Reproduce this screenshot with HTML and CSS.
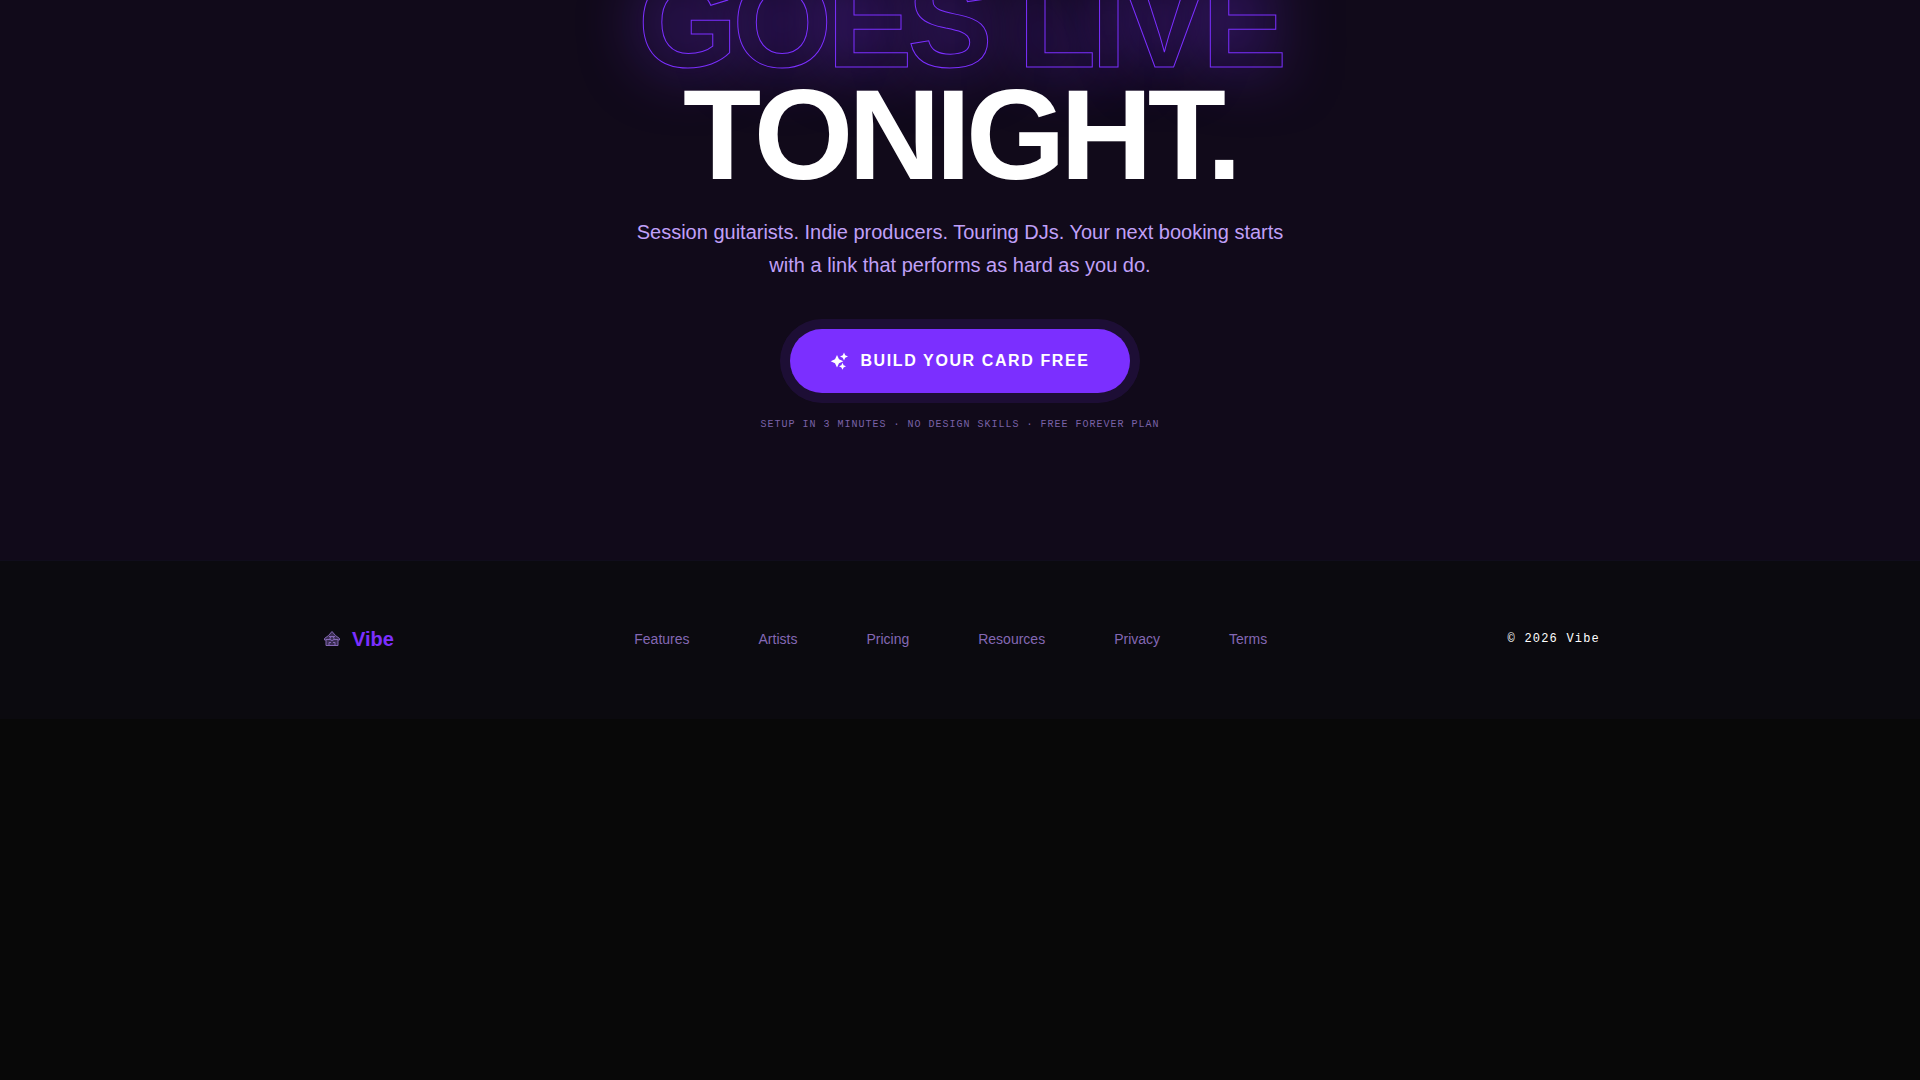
FILE: index.html
```
<!DOCTYPE html>
<html lang="en">
<head>
    <meta charset="UTF-8">
    <meta name="viewport" content="width=device-width, initial-scale=1.0">
    <title>Vibe</title>
    <link rel="stylesheet" href="styles.css">
</head>
<body>
    <section class="cta">
        <h2 class="cta-title">
            <span class="outline">GOES LIVE</span>
            <span class="solid">TONIGHT.</span>
        </h2>
        <p class="cta-text">Session guitarists. Indie producers. Touring DJs. Your next booking starts with a link that performs as hard as you do.</p>
        <button class="cta-button" type="button">
            <svg class="sparkle" viewBox="0 0 20 20" aria-hidden="true">
                <path d="M7 4 9 8.300 13.300 10.300 9 12.300 7 16.600 5 12.300 0.700 10.300 5 8.300Z"/>
                <path d="M14 1.500 15.200 4.300 18 5.500 15.200 6.700 14 9.500 12.800 6.700 10 5.500 12.800 4.300Z"/>
                <path d="M12.500 11.800 13.600 14.200 16 15.300 13.600 16.400 12.500 18.800 11.400 16.400 9 15.300 11.400 14.200Z"/>
            </svg>
            Build your card free
        </button>
        <p class="cta-note">Setup in 3 minutes · No design skills · Free forever plan</p>
    </section>

    <footer class="footer">
        <div class="footer-inner">
            <a class="brand" href="#">
                <svg class="brand-icon" viewBox="0 0 24 24" aria-hidden="true">
                    <path class="brand-shade" d="M12 4.500 15.500 8.500 19.500 11.500V13H18V18.500H6V13H4.500V11.500L8.500 8.500Z"/>
                    <path d="M9 9.500H15M6 12.500H10M14 12.500H18M9 15.500V18M15 15.500V18M9 15.500H11M13 15.500H15"/>
                    <circle cx="12" cy="11.500" r="2"/>
                </svg>
                Vibe
            </a>
            <nav class="footer-nav">
                <a href="#">Features</a>
                <a href="#">Artists</a>
                <a href="#">Pricing</a>
                <a href="#">Resources</a>
                <a href="#">Privacy</a>
                <a href="#">Terms</a>
            </nav>
            <span class="copyright">© 2026 Vibe</span>
        </div>
    </footer>
</body>
</html>
```

FILE: styles.css
```
* {
    box-sizing: border-box;
    margin: 0;
    padding: 0;
}
body {
    font-family: "Liberation Sans", Arial, sans-serif;
    background: #080808;
    color: #fff;
}
.cta {
    display: flex;
    flex-direction: column;
    align-items: center;
    padding: 0 24px 128px;
    background: #110a1a;
    text-align: center;
    overflow: hidden;
}
.cta-title {
    margin-top: -33px;
    font-size: 128px;
    font-weight: bold;
    line-height: 112px;
    letter-spacing: -0.04em;
}
.cta-title span {
    display: block;
}
.outline {
    color: transparent;
    -webkit-text-stroke: 1px #7b2fff;
    text-shadow: 0 0 60px rgba(123, 47, 255, 0.5);
}
.solid {
    position: relative;
}
.cta-text {
    max-width: 680px;
    margin-top: 25px;
    font-size: 20px;
    line-height: 33px;
    color: #c0a0f8;
}
.cta-button {
    display: flex;
    align-items: center;
    gap: 10px;
    height: 64px;
    margin-top: 47px;
    padding: 0 40px;
    border: none;
    border-radius: 32px;
    background: #7b2fff;
    box-shadow: 0 0 0 10px rgba(123, 47, 255, 0.12);
    color: #fff;
    font-family: inherit;
    font-size: 16px;
    font-weight: bold;
    letter-spacing: 0.1em;
    text-transform: uppercase;
    cursor: pointer;
}
.sparkle {
    width: 20px;
    height: 20px;
    fill: currentColor;
}
.cta-note {
    margin-top: 25px;
    font-family: "Liberation Mono", monospace;
    font-size: 10px;
    line-height: 14px;
    letter-spacing: 1px;
    text-transform: uppercase;
    color: #7a62a8;
}
.footer {
    padding: 63px 24px 65px;
    border-top: 1px solid #100d1c;
    background: #0b0a0f;
}
.footer-inner {
    display: flex;
    align-items: center;
    justify-content: space-between;
    max-width: 1280px;
    min-height: 30px;
    margin: 0 auto;
}
.brand {
    display: flex;
    align-items: center;
    gap: 8px;
    font-size: 20px;
    font-weight: bold;
    color: #7b2fff;
    text-decoration: none;
}
.brand-icon {
    width: 24px;
    height: 24px;
    fill: none;
    stroke: #8468b4;
    stroke-width: 1;
}
.brand-shade {
    fill: #3a2d52;
}
.footer-nav {
    display: flex;
    gap: 69px;
}
.footer-nav a {
    font-size: 14px;
    color: #8468b4;
    text-decoration: none;
}
.copyright {
    font-family: "Liberation Mono", monospace;
    font-size: 12px;
    letter-spacing: 0.1em;
}
```
